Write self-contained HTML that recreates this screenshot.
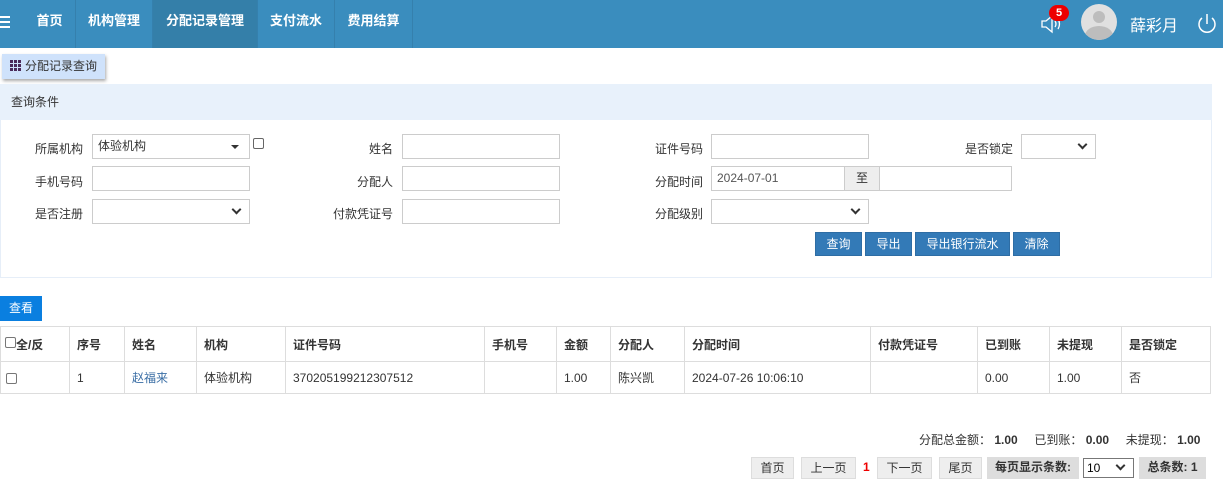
<!DOCTYPE html>
<html><head><meta charset="utf-8"><style>
*{box-sizing:border-box;margin:0;padding:0}
body{width:1223px;height:488px;overflow:hidden;background:#fff;font-family:"Liberation Sans","Noto Sans CJK SC",sans-serif;font-size:12px;color:#333;position:relative}
.a{position:absolute}
.nav{left:0;top:0;width:1223px;height:48px;background:#3a8dbe}
.ni{position:absolute;top:0;height:48px;line-height:42px;color:#fff;font-weight:bold;font-size:13px;text-align:center;border-right:1px solid #3580ad}
.lbl{position:absolute;font-size:12px;color:#333;text-align:right}
.in{position:absolute;height:25px;border:1px solid #ccc;background:#fff;font-size:12px;padding-left:5px;line-height:23px}
.sel::after{content:"";position:absolute;right:9px;top:6px;width:5px;height:5px;border-right:2px solid #333;border-bottom:2px solid #333;transform:rotate(45deg)}
.btn{position:absolute;top:232px;height:24px;background:#337ab7;color:#fff;border:1px solid #2e6da4;text-align:center;line-height:22px;font-size:12px}
table{position:absolute;left:0;top:326px;width:1211px;border-collapse:collapse;font-size:12px}
td{border:1px solid #ddd;padding:0 7px;height:32px}
tr.h td{font-weight:bold;height:35px}
.pb{position:absolute;top:457px;height:22px;background:#eee;border:1px solid #ddd;text-align:center;line-height:20px;font-size:12px}
.cb{display:inline-block;width:11px;height:11px;border:1px solid #777;border-radius:2px;vertical-align:middle}
</style></head><body>
<div class="a nav"></div>
<div class="a" style="left:0;top:16px;width:10px;height:12px;border-top:2px solid #fff;border-bottom:2px solid #fff"></div>
<div class="a" style="left:0;top:21px;width:10px;height:2px;background:#fff"></div>
<div class="ni" style="left:24px;width:52px">首页</div>
<div class="ni" style="left:76px;width:77px">机构管理</div>
<div class="ni" style="left:153px;width:105px;background:#347fa9">分配记录管理</div>
<div class="ni" style="left:258px;width:77px">支付流水</div>
<div class="ni" style="left:335px;width:78px">费用结算</div>
<svg class="a" style="left:1040px;top:12px" width="24" height="24" viewBox="0 0 24 24" fill="none" stroke="#fff" stroke-width="1.3"><path d="M2 9h4l6-5v16l-6-5H2z"/><path d="M15 9q2 3 0 6M18 7q3 5 0 10"/></svg>
<div class="a" style="left:1049px;top:5px;width:20px;height:16px;border-radius:8px;background:#e00;color:#fff;font-weight:bold;font-size:11px;text-align:center;line-height:16px">5</div>
<div class="a" style="left:1081px;top:4px;width:36px;height:36px;border-radius:50%;background:#e0e0e0;overflow:hidden"><div class="a" style="left:12px;top:7px;width:12px;height:12px;border-radius:50%;background:#bdbdbd"></div><div class="a" style="left:4px;top:22px;width:28px;height:20px;border-radius:50%;background:#bdbdbd"></div></div>
<div class="a" style="left:1130px;top:12px;color:#fff;font-size:16px">薛彩月</div>
<svg class="a" style="left:1196px;top:12px" width="22" height="24" viewBox="0 0 22 24" fill="none" stroke="#fff" stroke-width="1.5"><path d="M6 6a8 8 0 1 0 10 0"/><path d="M11 2v10"/></svg>

<div class="a" style="left:2px;top:54px;width:103px;height:25px;background:#cfe2fb;box-shadow:1px 2px 3px #aaa;line-height:24px;padding-left:23px;font-size:12px">分配记录查询</div>
<div class="a" style="left:10px;top:60px;width:11px;height:11px;background:repeating-linear-gradient(90deg,#4a2a5a 0 3px,transparent 3px 4px)"></div>
<div class="a" style="left:10px;top:63px;width:11px;height:1px;background:#cfe2fb"></div><div class="a" style="left:10px;top:67px;width:11px;height:1px;background:#cfe2fb"></div>

<div class="a" style="left:0;top:84px;width:1212px;height:194px;border:1px solid #e6eef8;border-top:none"></div>
<div class="a" style="left:0;top:84px;width:1212px;height:36px;background:#e8f1fb;padding-left:11px;line-height:36px">查询条件</div>

<div class="lbl" style="left:20px;top:140px;width:63px">所属机构</div>
<div class="in" style="left:92px;top:134px;width:158px;line-height:23px">体验机构</div>
<div class="a" style="left:231px;top:145px;border:4px solid transparent;border-top-color:#333;border-bottom:none"></div>
<div class="a" style="left:253px;top:138px;width:11px;height:11px;border:1px solid #666;border-radius:2px"></div>
<div class="lbl" style="left:330px;top:140px;width:63px">姓名</div>
<div class="in" style="left:402px;top:134px;width:158px"></div>
<div class="lbl" style="left:640px;top:140px;width:63px">证件号码</div>
<div class="in" style="left:711px;top:134px;width:158px"></div>
<div class="lbl" style="left:950px;top:140px;width:63px">是否锁定</div>
<div class="in sel" style="left:1021px;top:134px;width:75px"></div>

<div class="lbl" style="left:20px;top:173px;width:63px">手机号码</div>
<div class="in" style="left:92px;top:166px;width:158px"></div>
<div class="lbl" style="left:330px;top:173px;width:63px">分配人</div>
<div class="in" style="left:402px;top:166px;width:158px"></div>
<div class="lbl" style="left:640px;top:173px;width:63px">分配时间</div>
<div class="in" style="left:711px;top:166px;width:134px;color:#555">2024-07-01</div>
<div class="in" style="left:844px;top:166px;width:36px;background:#eee;text-align:center;padding:0">至</div>
<div class="in" style="left:879px;top:166px;width:133px"></div>

<div class="lbl" style="left:20px;top:205px;width:63px">是否注册</div>
<div class="in sel" style="left:92px;top:199px;width:158px"></div>
<div class="lbl" style="left:330px;top:205px;width:63px">付款凭证号</div>
<div class="in" style="left:402px;top:199px;width:158px"></div>
<div class="lbl" style="left:640px;top:205px;width:63px">分配级别</div>
<div class="in sel" style="left:711px;top:199px;width:158px"></div>

<div class="btn" style="left:815px;width:47px">查询</div>
<div class="btn" style="left:865px;width:47px">导出</div>
<div class="btn" style="left:915px;width:95px">导出银行流水</div>
<div class="btn" style="left:1013px;width:47px">清除</div>

<div class="a" style="left:0;top:296px;width:42px;height:25px;background:#0a7fe0;color:#fff;text-align:center;line-height:25px">查看</div>

<table>
<colgroup><col style="width:69px"><col style="width:55px"><col style="width:72px"><col style="width:89px"><col style="width:199px"><col style="width:72px"><col style="width:54px"><col style="width:74px"><col style="width:186px"><col style="width:107px"><col style="width:72px"><col style="width:72px"><col style="width:89px"></colgroup>
<tr class="h"><td style="padding-left:4px"><span class="cb" style="margin-top:-6px"></span>全/反</td><td>序号</td><td>姓名</td><td>机构</td><td>证件号码</td><td>手机号</td><td>金额</td><td>分配人</td><td>分配时间</td><td>付款凭证号</td><td>已到账</td><td>未提现</td><td>是否锁定</td></tr>
<tr><td style="padding-left:5px"><span class="cb"></span></td><td>1</td><td style="color:#3a6ea5">赵福来</td><td>体验机构</td><td>370205199212307512</td><td></td><td>1.00</td><td>陈兴凯</td><td>2024-07-26 10:06:10</td><td></td><td>0.00</td><td>1.00</td><td>否</td></tr>
</table>

<div class="a" style="left:919px;top:431px;font-size:12px">分配总金额： <b>1.00</b>&nbsp;&nbsp;&nbsp;&nbsp; 已到账： <b>0.00</b>&nbsp;&nbsp;&nbsp;&nbsp; 未提现： <b>1.00</b></div>
<div class="pb" style="left:751px;width:43px">首页</div>
<div class="pb" style="left:801px;width:55px">上一页</div>
<div class="a" style="left:863px;top:460px;color:#e00;font-weight:bold">1</div>
<div class="pb" style="left:877px;width:55px">下一页</div>
<div class="pb" style="left:939px;width:43px">尾页</div>
<div class="pb" style="left:987px;width:92px;background:#ddd;font-weight:bold;border:none">每页显示条数:</div>
<div class="in sel" style="left:1083px;top:458px;width:51px;height:20px;line-height:18px;border-color:#777;color:#000;padding-left:3px"><style>.x::after{top:3px}</style>10</div>
<div class="pb" style="left:1139px;width:67px;background:#ddd;font-weight:bold;border:none">总条数: 1</div>
<style>.in.sel[style*="top:458px"]::after{top:3px}</style>
</body></html>
